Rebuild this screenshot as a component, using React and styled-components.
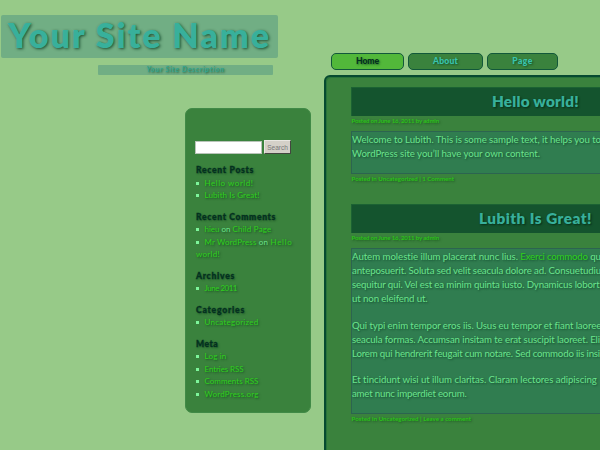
import React, { useLayoutEffect, useRef, useState } from "react";
import styled, { createGlobalStyle } from "styled-components";

const Global = createGlobalStyle`
  * { box-sizing: border-box; }
  html, body { margin: 0; background: #97ca88; overflow: hidden; }
  body { font-family: Lato, "Open Sans", sans-serif; color: #6be38c; }
  h1, h2, h3, p, ul { margin: 0; padding: 0; font-weight: inherit; }
`;

const Page = styled.div`
  width: 600px;
  height: 450px;
  overflow: hidden;
  display: grid;
  grid-template-columns: 324px 420px;
  background: #97ca88;
`;

const LeftColumn = styled.div`
  display: flex;
  flex-direction: column;
`;

const SiteTitle = styled.h1`
  margin: 15px 0 0 1px;
  width: 277px;
  height: 43px;
  padding-left: 7px;
  border-radius: 2px;
  background: #71ae84;
  color: #38b09b;
  font-size: 34px;
  font-weight: 800;
  line-height: 39px;
  text-shadow: 1px 1px 3px rgba(0, 50, 25, 0.75);
`;

const SiteDescription = styled.p`
  margin: 7px 0 0 98px;
  width: 175px;
  height: 10px;
  border-radius: 1px;
  background: #71ae84;
  color: #32a48e;
  font-size: 7.3px;
  font-weight: 700;
  font-style: italic;
  line-height: 10px;
  text-align: center;
  text-shadow: 1px 1px 2px rgba(0, 50, 25, 0.6);
`;

const Sidebar = styled.aside`
  margin: 33px 0 0 185px;
  width: 126px;
  height: 305px;
  padding: 32px 10px 0 10px;
  border: 1px solid #418a47;
  border-radius: 7px;
  background: #3a823d;
  display: flex;
  flex-direction: column;
  gap: 9px;
`;

const SearchForm = styled.div`
  display: flex;
  align-items: flex-end;
  gap: 2px;
  height: 14px;
  margin: -1px 0 1px -1px;
`;

const SearchInput = styled.input`
  width: 67px;
  height: 13px;
  padding: 0;
  border: 1px solid #b9c4b9;
  border-radius: 0;
  background: #fff;
`;

const SearchButton = styled.button`
  width: 27px;
  height: 14px;
  padding: 0;
  border: 1px solid;
  border-color: #e9e7e2 #43473f #43473f #e9e7e2;
  border-radius: 0;
  background: #d4d0c8;
  color: #777;
  font: 6.5px/11px "Liberation Sans", sans-serif;
`;

const WidgetTitle = styled.h3`
  color: #03301f;
  font-size: 8.5px;
  font-weight: 900;
  line-height: 12.5px;
  -webkit-text-stroke: 0.3px #03301f;
  text-shadow: 1px 1px 2px rgba(0, 40, 20, 0.5);
`;

const WidgetItem = styled.li`
  list-style: none;
  font-size: 8px;
  line-height: 12.5px;
  white-space: nowrap;
  text-shadow: 1px 1px 2px rgba(0, 50, 20, 0.6);
  &::before {
    content: "";
    display: inline-block;
    width: 3px;
    height: 3px;
    margin-right: 5.5px;
    vertical-align: 1px;
    background: #7df59a;
  }
`;

const Link = styled.span`
  color: #2fcf1c;
`;

const RightColumn = styled.div`
  display: flex;
  flex-direction: column;
`;

const Nav = styled.nav`
  display: flex;
  gap: 4px;
  margin: 53px 0 5px 7px;
`;

const Tab = styled.span`
  width: ${(p) => p.$width}px;
  height: 17px;
  border: 1px solid #12583a;
  border-radius: 5px;
  background: ${(p) => (p.$active ? "#52b83a" : "#3a823d")};
  color: ${(p) => (p.$active ? "#03301f" : "#39c4ae")};
  font-size: 8.6px;
  font-weight: 900;
  line-height: 14px;
  text-align: center;
  text-shadow: 1px 1px 2px rgba(0, 50, 25, 0.6);
`;

const Main = styled.main`
  height: 400px;
  padding: 10px 0 0 25px;
  border: 2px solid #064a30;
  border-radius: 6px;
  background: #3a823d;
  box-shadow: inset 1px 1px 0 #28733a;
`;

const Post = styled.article`
  width: 369px;
  & + & {
    margin-top: 20px;
  }
`;

const PostTitle = styled.h2`
  height: 29px;
  border: 1px solid #1b6233;
  border-bottom: 0;
  background: #14542e;
  color: #38b09b;
  font-size: 15.3px;
  font-weight: 800;
  line-height: 26px;
  text-align: center;
  text-shadow: 1px 1px 2px rgba(0, 30, 15, 0.7);
`;

const PostMeta = styled.p`
  height: ${(p) => p.$height}px;
  padding-left: 0.5px;
  color: #2cc01a;
  font-size: 6.1px;
  font-weight: 700;
  line-height: 9.5px;
  text-shadow: 1px 1px 2px rgba(0, 60, 10, 0.5);
`;

const PostBody = styled.div`
  height: ${(p) => p.$height}px;
  border: 1px solid #2c6450;
  background: #307d50;
  font-size: 9.7px;
  text-shadow: 1px 1px 2px rgba(0, 50, 30, 0.6);
`;

const Paragraph = styled.p`
  & + & {
    margin-top: 12.5px;
  }
`;

const Line = styled.span`
  display: block;
  line-height: 14px;
  white-space: nowrap;
`;

const TrackedText = styled.span`
  display: inline-block;
  white-space: pre;
`;

/* Tracks a run of text so that it takes up the given width. */
function Tracked({ width, children }) {
  const ref = useRef(null);
  const [spacing, setSpacing] = useState(0);
  useLayoutEffect(() => {
    const el = ref.current;
    const natural = el.getBoundingClientRect().width;
    setSpacing((width - natural) / el.textContent.length);
  }, [width]);
  return (
    <TrackedText ref={ref} style={{ letterSpacing: spacing }}>
      {children}
    </TrackedText>
  );
}

const widgets = [
  { title: "Recent Posts", width: 58, items: [[["Hello world!", 49, true]], [["Lubith Is Great!", 55, true]]] },
  {
    title: "Recent Comments",
    width: 80,
    items: [
      [["hieu", 15, true], [" on ", 13], ["Child Page", 39, true]],
      [["Mr WordPress", 52, true], [" on ", 14], ["Hello", 22, true]],
    ],
    wrapped: ["world!", 24],
  },
  { title: "Archives", width: 39, items: [[["June 2011", 32.5, true]]] },
  { title: "Categories", width: 49, items: [[["Uncategorized", 54, true]]] },
  {
    title: "Meta",
    width: 22,
    items: [[["Log in", 22, true]], [["Entries RSS", 39, true]], [["Comments RSS", 54, true]], [["WordPress.org", 54, true]]],
  },
];

const WrappedLine = styled.div`
  font-size: 8px;
  line-height: 12.5px;
  text-shadow: 1px 1px 2px rgba(0, 50, 20, 0.6);
`;

function Widget({ title, width, items, wrapped }) {
  return (
    <section>
      <WidgetTitle><Tracked width={width}>{title}</Tracked></WidgetTitle>
      <ul>
        {items.map((parts, i) => (
          <WidgetItem key={i}>
            {parts.map(([text, w, link]) => {
              const run = <Tracked key={text} width={w}>{text}</Tracked>;
              return link ? <Link key={text}>{run}</Link> : run;
            })}
          </WidgetItem>
        ))}
      </ul>
      {wrapped && <WrappedLine><Link><Tracked width={wrapped[1]}>{wrapped[0]}</Tracked></Link></WrappedLine>}
    </section>
  );
}

const L = ({ w, children }) => <Line><Tracked width={w}>{children}</Tracked></Line>;

export default function App() {
  return (
    <>
      <Global />
      <Page>
        <LeftColumn>
          <SiteTitle><Tracked width={263}>Your Site Name</Tracked></SiteTitle>
          <SiteDescription><Tracked width={78}>Your Site Description</Tracked></SiteDescription>
          <Sidebar>
            <SearchForm>
              <SearchInput />
              <SearchButton>Search</SearchButton>
            </SearchForm>
            {widgets.map((w) => <Widget key={w.title} {...w} />)}
          </Sidebar>
        </LeftColumn>
        <RightColumn>
          <Nav>
            <Tab $width={73} $active><Tracked width={23}>Home</Tracked></Tab>
            <Tab $width={75}><Tracked width={25}>About</Tracked></Tab>
            <Tab $width={71}><Tracked width={20.5}>Page</Tracked></Tab>
          </Nav>
          <Main>
            <Post>
              <PostTitle><Tracked width={87}>Hello world!</Tracked></PostTitle>
              <PostMeta $height={15}><Tracked width={87.5}>Posted on June 16, 2011 by admin</Tracked></PostMeta>
              <PostBody $height={43}>
                <Paragraph>
                  <L w={249}>Welcome to Lubith. This is some sample text, it helps you to</L>
                  <L w={188}>WordPress site you’ll have your own content.</L>
                </Paragraph>
              </PostBody>
              <PostMeta $height={10}><Tracked width={102.5}>Posted in Uncategorized | 1 Comment</Tracked></PostMeta>
            </Post>
            <Post>
              <PostTitle><Tracked width={113}>Lubith Is Great!</Tracked></PostTitle>
              <PostMeta $height={15}><Tracked width={87.5}>Posted on June 16, 2011 by admin</Tracked></PostMeta>
              <PostBody $height={166}>
                <Paragraph>
                  <Line>
                    <Tracked width={168.5}>{"Autem molestie illum placerat nunc lius. "}</Tracked>
                    <Link><Tracked width={67.5}>Exerci commodo</Tracked></Link>
                    <Tracked width={13}>{" qu"}</Tracked>
                  </Line>
                  <L w={249}>anteposuerit. Soluta sed velit seacula dolore ad. Consuetudiu</L>
                  <L w={247.5}>sequitur qui. Vel est ea minim quinta iusto. Dynamicus lobort</L>
                  <L w={75.5}>ut non eleifend ut.</L>
                </Paragraph>
                <Paragraph>
                  <L w={249}>Qui typi enim tempor eros iis. Usus eu tempor et fiant laoree</L>
                  <L w={248}>seacula formas. Accumsan insitam te erat suscipit laoreet. Eli</L>
                  <L w={248}>Lorem qui hendrerit feugait cum notare. Sed commodo iis insi</L>
                </Paragraph>
                <Paragraph>
                  <L w={245}>Et tincidunt wisi ut illum claritas. Claram lectores adipiscing</L>
                  <L w={114.5}>amet nunc imperdiet eorum.</L>
                </Paragraph>
              </PostBody>
              <PostMeta $height={10}><Tracked width={119.5}>Posted in Uncategorized | Leave a comment</Tracked></PostMeta>
            </Post>
          </Main>
        </RightColumn>
      </Page>
    </>
  );
}
